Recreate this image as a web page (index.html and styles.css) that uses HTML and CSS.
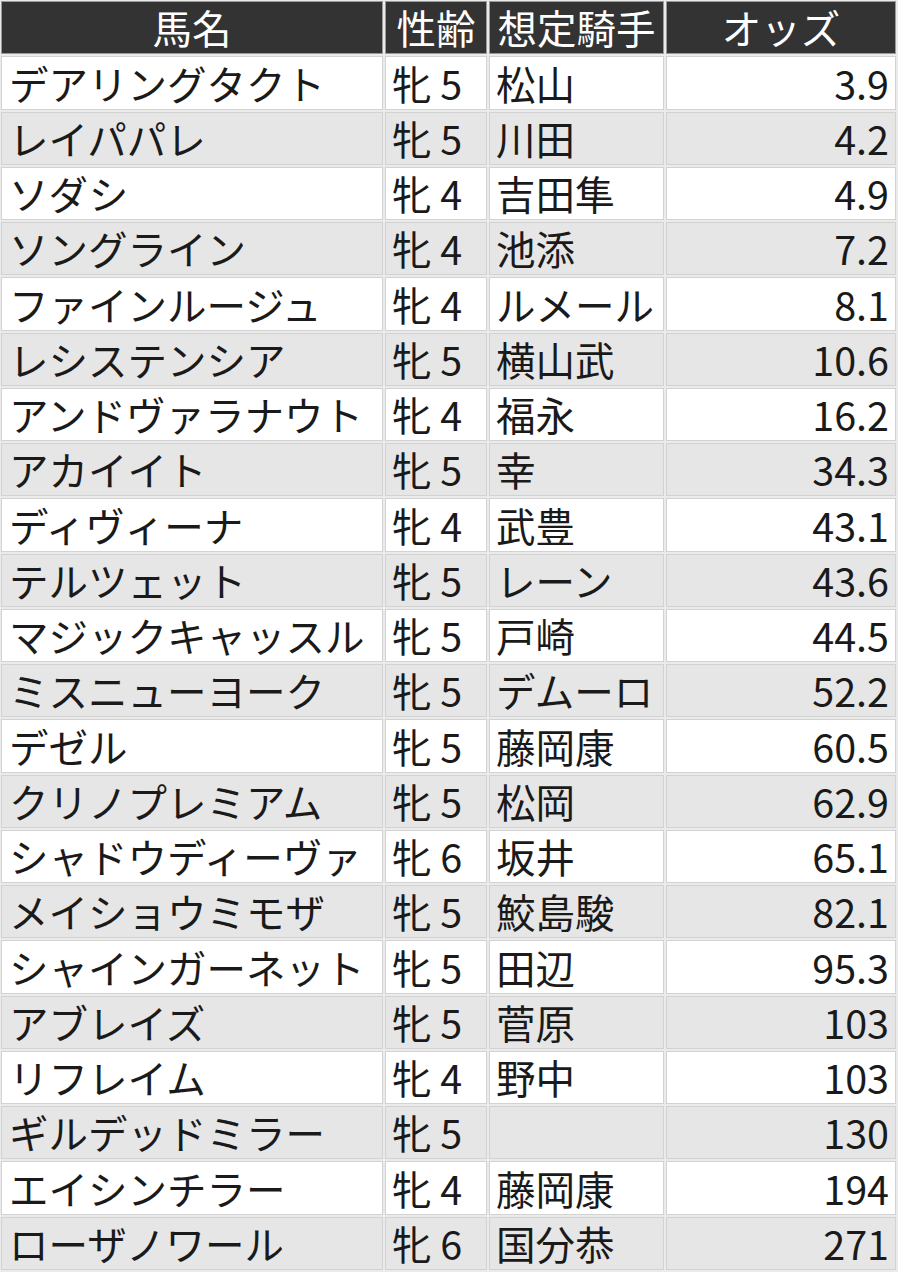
FILE: index.html
```html
<!DOCTYPE html>
<html lang="ja">
<head>
<meta charset="utf-8">
<title>想定オッズ</title>
<link rel="stylesheet" href="styles.css">
</head>
<body>
<table class="odds">
  <thead>
    <tr>
      <th class="c-name">馬名</th>
      <th class="c-age">性齢</th>
      <th class="c-jockey">想定騎手</th>
      <th class="c-odds">オッズ</th>
    </tr>
  </thead>
  <tbody>
    <tr><td>デアリングタクト</td><td>牝 5</td><td>松山</td><td class="num">3.9</td></tr>
    <tr><td>レイパパレ</td><td>牝 5</td><td>川田</td><td class="num">4.2</td></tr>
    <tr><td>ソダシ</td><td>牝 4</td><td>吉田隼</td><td class="num">4.9</td></tr>
    <tr><td>ソングライン</td><td>牝 4</td><td>池添</td><td class="num">7.2</td></tr>
    <tr><td>ファインルージュ</td><td>牝 4</td><td>ルメール</td><td class="num">8.1</td></tr>
    <tr><td>レシステンシア</td><td>牝 5</td><td>横山武</td><td class="num">10.6</td></tr>
    <tr><td>アンドヴァラナウト</td><td>牝 4</td><td>福永</td><td class="num">16.2</td></tr>
    <tr><td>アカイイト</td><td>牝 5</td><td>幸</td><td class="num">34.3</td></tr>
    <tr><td>ディヴィーナ</td><td>牝 4</td><td>武豊</td><td class="num">43.1</td></tr>
    <tr><td>テルツェット</td><td>牝 5</td><td>レーン</td><td class="num">43.6</td></tr>
    <tr><td>マジックキャッスル</td><td>牝 5</td><td>戸崎</td><td class="num">44.5</td></tr>
    <tr><td>ミスニューヨーク</td><td>牝 5</td><td>デムーロ</td><td class="num">52.2</td></tr>
    <tr><td>デゼル</td><td>牝 5</td><td>藤岡康</td><td class="num">60.5</td></tr>
    <tr><td>クリノプレミアム</td><td>牝 5</td><td>松岡</td><td class="num">62.9</td></tr>
    <tr><td>シャドウディーヴァ</td><td>牝 6</td><td>坂井</td><td class="num">65.1</td></tr>
    <tr><td>メイショウミモザ</td><td>牝 5</td><td>鮫島駿</td><td class="num">82.1</td></tr>
    <tr><td>シャインガーネット</td><td>牝 5</td><td>田辺</td><td class="num">95.3</td></tr>
    <tr><td>アブレイズ</td><td>牝 5</td><td>菅原</td><td class="num">103</td></tr>
    <tr><td>リフレイム</td><td>牝 4</td><td>野中</td><td class="num">103</td></tr>
    <tr><td>ギルデッドミラー</td><td>牝 5</td><td></td><td class="num">130</td></tr>
    <tr><td>エイシンチラー</td><td>牝 4</td><td>藤岡康</td><td class="num">194</td></tr>
    <tr><td>ローザノワール</td><td>牝 6</td><td>国分恭</td><td class="num">271</td></tr>
  </tbody>
</table>
</body>
</html>
```
FILE: styles.css
```css
html, body {
  margin: 0;
  padding: 0;
  background: #ffffff;
}

.odds {
  margin: -1px 0 0 -1px;
  width: 899px;
  table-layout: fixed;
  border-collapse: separate;
  border-spacing: 2px;
  background: #ebebeb;
  font-family: "Noto Sans CJK JP", "Noto Sans", sans-serif;
  font-size: 39.5px;
  color: #1a1a1a;
}

.odds th,
.odds td {
  box-sizing: border-box;
  height: 53.25px;
  padding: 0 6px 1px;
  border: 1px solid #d2d2d2;
  vertical-align: middle;
  line-height: 1.2;
  white-space: nowrap;
  font-weight: normal;
}

.odds th {
  background: #333333;
  color: #ffffff;
  text-align: center;
  border-color: #9a9a9a;
}

.c-name { width: 382px; }
.c-age { width: 102px; }
.c-jockey { width: 175px; }
.c-odds { width: 230px; }

.odds td {
  text-align: left;
  background: #ffffff;
}

.odds tbody tr:nth-child(even) td {
  background: #e6e6e6;
}

.odds td.num {
  text-align: right;
}

.odds td:first-child {
  padding-left: 7px;
}
```
